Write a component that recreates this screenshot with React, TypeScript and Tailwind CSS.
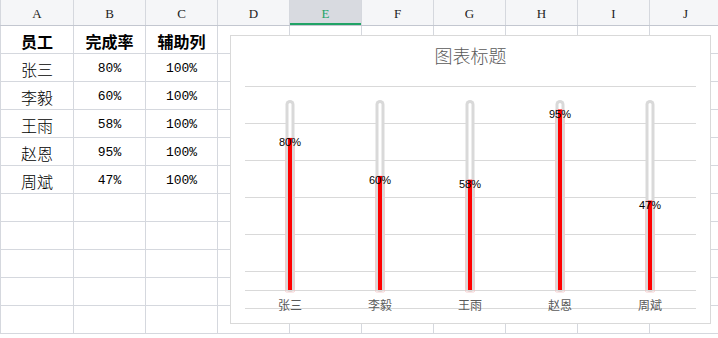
import React from "react";

const cols = ["A", "B", "C", "D", "E", "F", "G", "H", "I", "J"];
const rows: string[][] = [
  ["员工", "完成率", "辅助列"],
  ["张三", "80%", "100%"],
  ["李毅", "60%", "100%"],
  ["王雨", "58%", "100%"],
  ["赵恩", "95%", "100%"],
  ["周斌", "47%", "100%"],
  [], [], [], [], [],
];

const data = [
  { name: "张三", v: 80 },
  { name: "李毅", v: 60 },
  { name: "王雨", v: 58 },
  { name: "赵恩", v: 95 },
  { name: "周斌", v: 47 },
];

function Chart() {
  const grid = [86, 123, 160, 197, 234, 271, 290, 308];
  const base = 290;
  const top = 100;
  return (
    <div className="absolute left-[230px] top-[35px] w-[481px] h-[289px] bg-white border border-[#d9d9d9]">
      <svg width="481" height="289" viewBox="230 35 481 289" className="absolute left-[-1px] top-[-1px]">
        {grid.map((y) => (
          <line key={y} x1={245} x2={696} y1={y + 0.5} y2={y + 0.5} stroke="#d9d9d9" strokeWidth={1} />
        ))}
        <text x={470.5} y={63} textAnchor="middle" fontSize={18} fill="#595959" className="font-['Noto_Sans_CJK_SC',sans-serif] font-light">
          图表标题
        </text>
        {data.map((d, i) => {
          const cx = 290 + i * 90;
          const t = base - (d.v / 100) * (base - top);
          return (
            <g key={d.name}>
              <rect x={cx - 4.5} y={top} width={9} height={192} rx={4.5} fill="#d9d9d9" />
              <rect x={cx - 1.5} y={top + 3} width={3} height={186} rx={1.5} fill="#ffffff" />
              <rect x={cx - 4.5} y={t} width={9} height={base + 2 - t} rx={1} fill="none" stroke="#f3c4c4" strokeWidth={0.8} />
              <rect x={cx - 2} y={t} width={4} height={base - t} fill="#ff0000" />
              <text x={cx} y={t + 8} textAnchor="middle" fontSize={11} fill="#000" className="font-['Liberation_Sans',sans-serif]">
                {d.v}%
              </text>
              <text x={cx} y={310} textAnchor="middle" fontSize={12} fill="#595959" className="font-['Noto_Sans_CJK_SC',sans-serif]">
                {d.name}
              </text>
            </g>
          );
        })}
      </svg>
    </div>
  );
}

export default function App() {
  return (
    <div className="relative w-[718px] h-[338px] overflow-hidden bg-white">
      <div className="flex h-[26px] bg-[#f5f6f8] border-b border-[#c3c7d0]">
        {cols.map((c, i) => (
          <div
            key={c}
            className={
              "shrink-0 h-full flex items-end justify-center pb-[2px] text-[13px] font-['Liberation_Serif',serif] border-r border-[#d5d8de] " +
              (i === 0 ? "w-[74px] border-l " : "w-[72px] ") +
              (c === "E" ? "bg-[#d8dae0] text-[#21a366] relative" : "text-[#222]")
            }
          >
            {c}
            {c === "E" && <div className="absolute left-0 right-0 bottom-0 h-[2px] bg-[#21a366]" />}
          </div>
        ))}
      </div>
      {rows.map((r, ri) => (
        <div key={ri} className="flex h-[28px] border-b border-[#d5d8de]">
          {cols.map((c, i) => {
            const txt = r[i] ?? "";
            const isHeader = ri === 0;
            const isPct = !isHeader && i > 0;
            return (
              <div
                key={c}
                className={
                  "shrink-0 h-full flex items-center justify-center pt-[2px] text-black border-r border-[#d5d8de] " +
                  (i === 0 ? "w-[74px] border-l " : "w-[72px] ") +
                  (isHeader
                    ? "text-[16px] font-bold font-['Noto_Sans_CJK_SC',sans-serif]"
                    : isPct
                    ? "text-[13px] font-['Liberation_Mono',monospace]"
                    : "text-[16px] font-light font-['Noto_Sans_CJK_SC',sans-serif]")
                }
              >
                {txt}
              </div>
            );
          })}
        </div>
      ))}
      <Chart />
    </div>
  );
}
